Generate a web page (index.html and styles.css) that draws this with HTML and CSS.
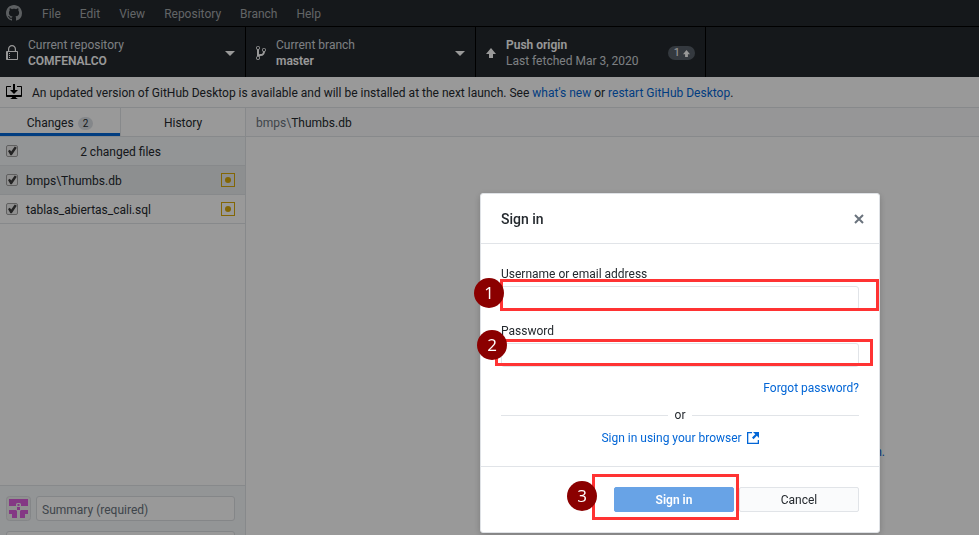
FILE: index.html
```html
<!DOCTYPE html>
<html lang="en">
<head>
<meta charset="utf-8">
<title>GitHub Desktop</title>
<link rel="stylesheet" href="styles.css">
</head>
<body>
<div class="app">
  <header class="titlebar">
    <svg class="logo" viewBox="0 0 16 16" width="16" height="16"><path d="M8 0C3.58 0 0 3.58 0 8c0 3.54 2.29 6.53 5.47 7.59.4.07.55-.17.55-.38 0-.19-.01-.82-.01-1.49-2.01.37-2.53-.49-2.69-.94-.09-.23-.48-.94-.82-1.13-.28-.15-.68-.52-.01-.53.63-.01 1.08.58 1.23.82.72 1.21 1.87.87 2.33.66.07-.52.28-.87.51-1.07-1.78-.2-3.64-.89-3.64-3.95 0-.87.31-1.59.82-2.15-.08-.2-.36-1.02.08-2.12 0 0 .67-.21 2.2.82.64-.18 1.32-.27 2-.27s1.36.09 2 .27c1.53-1.04 2.2-.82 2.2-.82.44 1.1.16 1.92.08 2.12.51.56.82 1.27.82 2.15 0 3.07-1.87 3.75-3.65 3.95.29.25.54.73.54 1.48 0 1.07-.01 1.93-.01 2.2 0 .21.15.46.55.38A8.01 8.01 0 0 0 16 8c0-4.42-3.58-8-8-8z"/></svg>
    <nav class="menu">
      <button>File</button><button>Edit</button><button>View</button><button>Repository</button><button>Branch</button><button>Help</button>
    </nav>
  </header>

  <div class="toolbar">
    <button class="tool tool-repo">
      <svg class="tool-icon" viewBox="0 0 12 16" width="12" height="16"><path d="M4 13H3v-1h1v1zm8-6v7c0 .55-.45 1-1 1H1c-.55 0-1-.45-1-1V7c0-.55.45-1 1-1h1V4c0-2.2 1.8-4 4-4s4 1.800 4 4v2h1c.55 0 1 .45 1 1zM3.200 6h5.600V4c0-1.540-1.260-2.800-2.800-2.800S3.200 2.460 3.200 4v2zM11 7H2v7h9V7zM4 8H3v1h1V8zm0 2H3v1h1v-1z"/></svg>
      <span class="tool-text"><span>Current repository</span><strong>COMFENALCO</strong></span>
      <span class="caret"></span>
    </button>
    <button class="tool tool-branch">
      <svg class="tool-icon" viewBox="0 0 10 16" width="10" height="16"><path d="M10 5c0-1.110-.89-2-2-2a1.993 1.993 0 0 0-1 3.720v.3c-.02.520-.23.980-.63 1.380-.4.400-.86.610-1.380.630-.83.020-1.480.160-2 .450V4.720a1.993 1.993 0 0 0-1-3.720C.88 1 0 1.890 0 3a2 2 0 0 0 1 1.720v6.560c-.59.350-1 .99-1 1.720 0 1.110.89 2 2 2 1.110 0 2-.89 2-2 0-.53-.2-1-.53-1.360.09-.06.48-.41.59-.47.25-.11.56-.17.94-.17 1.050-.05 1.950-.45 2.750-1.250S8.950 7.770 9 6.730h-.02C9.590 6.370 10 5.730 10 5zM2 1.800c.66 0 1.200.55 1.200 1.200 0 .65-.55 1.200-1.200 1.200C1.350 4.200.8 3.650.8 3c0-.65.55-1.200 1.200-1.200zm0 12.410c-.66 0-1.200-.55-1.200-1.200 0-.65.55-1.200 1.200-1.200.65 0 1.200.55 1.200 1.200 0 .65-.55 1.200-1.200 1.200zm6-8c-.66 0-1.200-.55-1.200-1.200 0-.65.55-1.200 1.200-1.200.65 0 1.200.55 1.200 1.200 0 .65-.55 1.200-1.200 1.200z"/></svg>
      <span class="tool-text"><span>Current branch</span><strong>master</strong></span>
      <span class="caret"></span>
    </button>
    <button class="tool tool-push">
      <svg class="tool-icon" viewBox="0 0 10 10" width="10" height="10"><path d="M5 0l5 6H7v4H3V6H0z"/></svg>
      <span class="tool-text"><strong>Push origin</strong><span>Last fetched Mar 3, 2020</span></span>
      <span class="ahead">1<svg viewBox="0 0 10 10" width="7" height="7"><path d="M5 0l5 6H7v4H3V6H0z"/></svg></span>
    </button>
  </div>

  <div class="banner">
    <svg viewBox="0 0 16 16" width="16" height="16"><path d="M4 6h3V0h2v6h3l-4 4-4-4zm11-4h-4v1h4v8H1V3h4V2H1c-.55 0-1 .45-1 1v9c0 .55.45 1 1 1h5.340c-.25.610-.860 1.390-2.340 2h8c-1.480-.61-2.090-1.390-2.340-2H15c.55 0 1-.45 1-1V3c0-.55-.45-1-1-1z"/></svg>
    <p>An updated version of GitHub Desktop is available and will be installed at the next launch. See <a href="#">what's new</a> or <a href="#">restart GitHub Desktop</a>.</p>
  </div>

  <div class="workspace">
    <aside class="sidebar">
      <div class="tabs">
        <button class="tab tab-active">Changes <span class="count">2</span></button>
        <button class="tab">History</button>
      </div>
      <label class="row row-head"><input type="checkbox" checked><span>2 changed files</span></label>
      <label class="row row-selected"><input type="checkbox" checked><span>bmps\Thumbs.db</span><i class="modified"></i></label>
      <label class="row"><input type="checkbox" checked><span>tablas_abiertas_cali.sql</span><i class="modified"></i></label>
      <form class="commit">
        <svg class="avatar" viewBox="0 0 25 25" width="25" height="25"><rect x=".5" y=".5" width="24" height="24" rx="3"/><path d="M3 3h19v7h-7V8l-1-1h-3l-1 1v2H3zM11.500 8h2v2h-2zM11 11h3v3h-3zM3 14h7l1 1v7H6v-4H3zM22 14h-7l-1 1v7h5v-4h3z"/></svg>
        <input class="summary" type="text" placeholder="Summary (required)" aria-label="Summary">
        <textarea class="description" aria-label="Description"></textarea>
      </form>
    </aside>
    <main class="content">
      <div class="path"><span>bmps\</span>Thumbs.db</div>
      <div class="blank"><a href="#">n.</a></div>
    </main>
  </div>
</div>

<div class="backdrop">
  <form class="dialog" role="dialog" aria-labelledby="dialog-title">
    <div class="dialog-head">
      <h1 id="dialog-title">Sign in</h1>
      <button class="close" type="button" aria-label="Close"><svg viewBox="0 0 10 10" width="10" height="10"><path d="M1 1l8 8M9 1L1 9"/></svg></button>
    </div>
    <div class="dialog-body">
      <div class="field">
        <label for="user">Username or email address</label>
        <input id="user" type="text">
        <span class="mark mark-user"></span><span class="step step-user">1</span>
      </div>
      <div class="field">
        <label for="pass">Password</label>
        <input id="pass" type="password">
        <span class="mark mark-pass"></span><span class="step step-pass">2</span>
      </div>
      <a class="forgot" href="#">Forgot password?</a>
      <div class="divider">or</div>
      <a class="browser" href="#">Sign in using your browser <svg viewBox="0 0 12 12" width="12" height="12"><path d="M5 0v1.300H1.300v9.400h9.400V8H12v4H0V0zM6 0h6v6L9.800 3.800 6.500 7.200 5 5.600 8.300 2.300z"/></svg></a>
    </div>
    <div class="dialog-foot">
      <button class="btn btn-primary" type="submit">Sign in</button>
      <button class="btn" type="button">Cancel</button>
      <span class="mark mark-submit"></span><span class="step step-submit">3</span>
    </div>
  </form>
</div>
</body>
</html>
```
FILE: styles.css
```css
* { box-sizing: border-box; }
body {
  margin: 0;
  font: 12px/16px Roboto, "Open Sans", sans-serif;
  color: #24292e;
  overflow: hidden;
}
button, input, textarea { font: inherit; color: inherit; }
button { border: 0; background: none; padding: 0; }
a { color: #0366d6; text-decoration: none; }
svg { flex: none; }
.app { display: flex; flex-direction: column; height: 100vh; background: #fff; }

.titlebar { display: flex; align-items: center; height: 27px; padding: 0 6px; gap: 20px; background: #24292e; border-bottom: 1px solid #000; }
.logo { fill: #9a9ea2; }
.menu { display: flex; gap: 19px; padding-top: 2px; color: #a4a8ab; }

.toolbar { display: flex; height: 50px; background: #24292e; color: #d1d5da; }
.tool { display: flex; align-items: center; text-align: left; border-right: 1px solid #000; }
.tool-repo { width: 246px; padding: 2px 10px 0 6px; gap: 10px; }
.tool-branch { width: 230px; padding: 2px 10px 0; gap: 10px; }
.tool-push { width: 230px; padding: 2px 10px 0; gap: 10px; }
.tool-icon { fill: #fff; }
.tool-text { flex: 1; display: flex; flex-direction: column; }
.tool-text strong { color: #fff; font-weight: 600; }
.caret { border: 5px solid transparent; border-top-color: #fff; border-bottom: 0; }
.ahead { display: flex; align-items: center; gap: 3px; height: 14px; padding: 0 5px 0 6px; border-radius: 7px; background: #586069; color: #fff; font-size: 11px; }
.ahead svg { fill: #fff; }

.banner { display: flex; align-items: center; gap: 10px; height: 31px; padding: 0 6px; border-bottom: 1px solid #e1e4e8; }
.banner p { margin: 0; padding-top: 2px; }

.workspace { flex: 1; display: flex; min-height: 0; }
.sidebar { width: 246px; display: flex; flex-direction: column; border-right: 1px solid #e1e4e8; }
.tabs { display: flex; height: 29px; flex: none; border-bottom: 1px solid #e1e4e8; }
.tab { flex: 1; display: flex; align-items: center; justify-content: center; gap: 4px; padding-top: 2px; }
.tab-active { flex: none; width: 121px; border-right: 1px solid #e1e4e8; box-shadow: inset 0 -3px #0366d6; }
.count { padding: 0 5px; border-radius: 7px; background: #dde1e6; font-size: 10px; line-height: 13px; }
.row { display: flex; align-items: center; gap: 8px; height: 29px; flex: none; padding: 0 10px 0 6px; border-bottom: 1px solid #e1e4e8; }
.row span { flex: 1; padding-top: 2px; }
.row-head { background: #f6f8fa; padding-right: 30px; }
.row-head span { text-align: center; }
.row-selected { background: #ebeef1; }
.row input { appearance: none; flex: none; width: 12px; height: 12px; margin: 0; border: 1px solid #a0a0a0; border-radius: 2px; background: #efefef; }
.row input:checked::before { content: ""; display: block; width: 10px; height: 10px; background: #3c3c3c; clip-path: polygon(10% 50%, 28% 38%, 42% 55%, 78% 5%, 98% 18%, 48% 92%, 34% 92%); }
.modified { display: grid; place-items: center; width: 14px; height: 14px; border: 1px solid #dbab09; }
.modified::before { content: ""; width: 6px; height: 6px; border-radius: 50%; background: #dbab09; }

.commit { display: grid; grid-template-columns: 25px 1fr; column-gap: 5px; row-gap: 10px; flex: none; height: 50px; overflow: hidden; margin-top: auto; padding: 10px 10px 0 6px; border-top: 1px solid #e1e4e8; background: #f6f8fa; }
.avatar rect { fill: #f0f0f0; stroke: #dcdfe3; }
.avatar path { fill: #dc5edc; }
.commit input, .commit textarea { width: 100%; border: 1px solid #dcdfe3; border-radius: 3px; background: #fff; }
.summary { display: block; height: 25px; padding: 2px 5px 0; }
.summary::placeholder { color: #6a737d; }
.description { grid-column: 1 / -1; height: 60px; resize: none; }

.content { flex: 1; display: flex; flex-direction: column; }
.path { display: flex; align-items: center; height: 29px; padding: 2px 10px 0; background: #fafbfc; border-bottom: 1px solid #e1e4e8; }
.path span { color: #6a737d; }
.blank { flex: 1; display: flex; align-items: flex-end; justify-content: flex-end; padding: 0 94px 75px 0; }

.backdrop { position: fixed; inset: 0; display: flex; align-items: flex-start; justify-content: flex-end; padding: 193px 99px 0 0; background: rgba(0, 0, 0, .4); }
.dialog { width: 400px; flex: none; background: #fff; border: 1px solid #dfe2e6; border-radius: 3px; box-shadow: 0 2px 7px rgba(0, 0, 0, .2); }
.dialog-head { display: flex; align-items: center; justify-content: space-between; height: 50px; padding: 0 15px 0 20px; border-bottom: 1px solid #e1e4e8; }
.dialog-head h1 { margin: 0; font-size: 14px; font-weight: 500; }
.close { display: flex; }
.close svg { stroke: #6a737d; stroke-width: 2; }
.dialog-body { display: flex; flex-direction: column; padding: 22px 20px 20px; }
.field { position: relative; display: flex; flex-direction: column; gap: 4px; margin-bottom: 13px; }
.field input { height: 24px; border: 1px solid #e1e4e8; border-radius: 3px; background: #fff; }
.forgot { align-self: flex-end; }
.divider { display: flex; align-items: center; gap: 7px; margin: 11px 0 7px; }
.divider::before, .divider::after { content: ""; flex: 1; border-top: 1px solid #e1e4e8; }
.browser { display: flex; align-items: center; justify-content: center; gap: 5px; }
.browser svg { fill: #0366d6; }
.dialog-foot { position: relative; display: flex; justify-content: flex-end; gap: 5px; padding: 20px; border-top: 1px solid #e1e4e8; }
.btn { width: 120px; height: 25px; border: 1px solid #e1e4e8; border-radius: 2px; background: #fafbfc; }
.btn-primary { border-color: #68a3e6; background: #68a3e6; color: #fff; font-weight: 600; }

/* Numbered callouts over the form */
.mark { position: absolute; border: 3px solid #ff3333; }
.mark-user { left: -1px; right: -20px; top: 13px; height: 32px; }
.mark-pass { left: -6px; right: -14px; top: 16px; height: 27px; }
.mark-submit { left: 111px; right: 140px; top: 7px; height: 46px; }
.step { position: absolute; width: 30px; height: 30px; border-radius: 50%; background: #8b0000; color: #fff; font: 17px/30px "Open Sans", sans-serif; text-align: center; }
.step-user { left: -27px; top: 12px; }
.step-pass { left: -24px; top: 7px; }
.step-submit { left: 86px; top: 14px; }
```
